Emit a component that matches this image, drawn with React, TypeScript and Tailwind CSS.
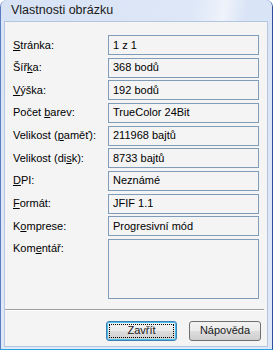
const rows: { label: React.ReactNode; value: string }[] = [
  { label: <><u>S</u>tránka:</>, value: "1 z 1" },
  { label: <>Šíř<u>k</u>a:</>, value: "368 bodů" },
  { label: <><u>V</u>ýška:</>, value: "192 bodů" },
  { label: <>Počet <u>b</u>arev:</>, value: "TrueColor 24Bit" },
  { label: <>Velikost (<u>p</u>aměť):</>, value: "211968 bajtů" },
  { label: <>Velikost (di<u>s</u>k):</>, value: "8733 bajtů" },
  { label: <><u>D</u>PI:</>, value: "Neznámé" },
  { label: <><u>F</u>ormát:</>, value: "JFIF 1.1" },
  { label: <>K<u>o</u>mprese:</>, value: "Progresivní mód" },
];

export default function App() {
  return (
    <div
      className="w-[273px] h-[350px] flex flex-col rounded-t-[7px] border-l border-r border-b border-l-[#5a7cc0] border-r-[#2c4f9e] border-b-[#2aa3e0] bg-[linear-gradient(to_bottom,#d9e4f6,#dfe8f7)] overflow-hidden"
      style={{ fontFamily: '"Liberation Sans", Arial, sans-serif' }}
    >
      {/* titulek */}
      <div className="h-[21px] shrink-0 flex items-center pl-[10px] bg-[linear-gradient(100deg,#d7e2f5_0%,#dde7f7_70%,#eef3fb_82%,#d9e4f6_90%)]">
        <span className="text-[12.5px] text-[#1a1a1a] leading-none">Vlastnosti obrázku</span>
      </div>

      {/* klientská oblast */}
      <div className="flex-1 ml-[3px] mr-[4px] mb-[2px] border border-[#b5c6e0] bg-[#f4f4f4] flex flex-col text-[11px] text-black">
        <div className="flex flex-col gap-[2.67px] pt-[13px] pl-[8px]">
          {rows.map((r, i) => (
            <div key={i} className="flex items-center">
              <div className="w-[95px] leading-none">{r.label}</div>
              <div className="w-[151px] h-[20px] border border-[#7f9db9] bg-[#f4f4f4] flex items-center pl-[4px] leading-none">
                {r.value}
              </div>
            </div>
          ))}
          <div className="flex items-start">
            <div className="w-[95px] pt-[4px] leading-none">
              Kom<u>e</u>ntář:
            </div>
            <div className="w-[151px] h-[60px] border border-[#7f9db9] bg-[#f4f4f4]" />
          </div>
        </div>

        <div className="mt-[10px] mx-0 border-t border-[#a0a0a0] border-b border-b-white mr-[3px]" />

        <div className="flex justify-end gap-[12px] pr-[6px] mt-[10px]">
          <button className="w-[71px] h-[20px] rounded-[3px] border border-[#3c7fb1] bg-[linear-gradient(to_bottom,#f2f2f2_0%,#ebebeb_50%,#dddddd_51%,#cfcfcf_100%)] p-[2px] shadow-[inset_0_0_0_1px_#48c0f0]">
            <span className="w-full h-full flex items-center justify-center border border-dotted border-black leading-none text-[#1a1a1a]">
              Zavřít
            </span>
          </button>
          <button className="w-[72px] h-[20px] rounded-[3px] border border-[#707070] bg-[linear-gradient(to_bottom,#f2f2f2_0%,#ebebeb_50%,#dddddd_51%,#cfcfcf_100%)] flex items-center justify-center leading-none text-[#1a1a1a]">
            Nápověda
          </button>
        </div>
      </div>
    </div>
  );
}
